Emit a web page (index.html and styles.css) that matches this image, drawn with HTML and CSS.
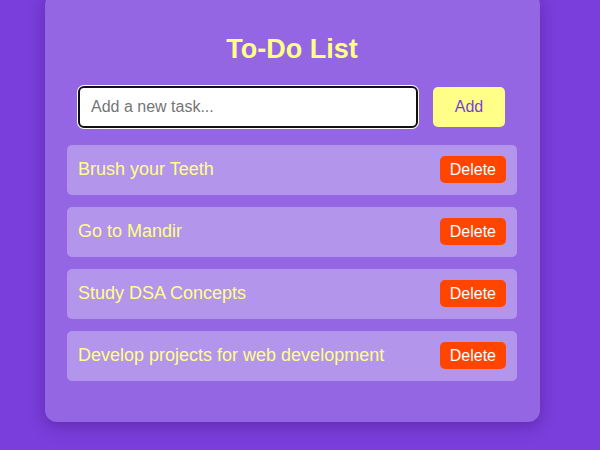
FILE: index.html
```html
<!DOCTYPE html>
<html>
<head>
<meta charset="utf-8">
<link rel="stylesheet" href="styles.css">
</head>
<body>
<div class="container">
  <h1 class="title">To-Do List</h1>
  <div class="input-row">
    <input class="task-input" type="text" placeholder="Add a new task...">
    <button class="add-btn">Add</button>
  </div>
  <ul class="list">
    <li class="item"><span class="item-text">Brush your Teeth</span><button class="del-btn">Delete</button></li>
    <li class="item"><span class="item-text">Go to Mandir</span><button class="del-btn">Delete</button></li>
    <li class="item"><span class="item-text">Study DSA Concepts</span><button class="del-btn">Delete</button></li>
    <li class="item"><span class="item-text">Develop projects for web development</span><button class="del-btn">Delete</button></li>
  </ul>
</div>
</body>
</html>
```

FILE: styles.css
```css
html, body {
  margin: 0;
  padding: 0;
  height: 100%;
  overflow: hidden;
}
body {
  background: #7a3edc;
  font-family: "Liberation Sans", Arial, sans-serif;
}
.container {
  box-sizing: border-box;
  width: 495px;
  margin: -7px 0 0 45px;
  padding: 30px 23px 41px 22px;
  background: #9466e3;
  border-radius: 12px;
  box-shadow: 0 4px 16px rgba(40, 10, 90, 0.35);
}
.title {
  margin: 10px 0 21px;
  text-align: center;
  color: #ffff88;
  font-size: 27px;
  font-weight: bold;
  line-height: 32px;
}
.input-row {
  display: flex;
  justify-content: flex-start;
  align-items: center;
  gap: 15px;
  padding-left: 11px;
  margin-bottom: 17px;
}
.task-input {
  box-sizing: border-box;
  width: 340px;
  height: 42px;
  padding: 0 11px;
  border: 2px solid #111;
  border-radius: 6px;
  box-shadow: 0 0 0 1px #ffffff;
  background: #fff;
  font-family: "Liberation Sans", Arial, sans-serif;
  font-size: 16px;
  color: #333;
  outline: none;
}
.task-input::placeholder {
  color: #757575;
}
.add-btn {
  box-sizing: border-box;
  width: 72px;
  height: 40px;
  border: none;
  border-radius: 5px;
  background: #ffff88;
  color: #7a3edc;
  font-family: "Liberation Sans", Arial, sans-serif;
  font-size: 16px;
  cursor: pointer;
}
.list {
  list-style: none;
  margin: 0;
  padding: 0;
  display: flex;
  flex-direction: column;
  gap: 12px;
}
.item {
  box-sizing: border-box;
  height: 50px;
  display: flex;
  align-items: center;
  justify-content: space-between;
  padding: 0 11px 2px 11px;
  background: #b495ec;
  border-radius: 5px;
}
.item-text {
  color: #ffff88;
  font-size: 18px;
}
.del-btn {
  box-sizing: border-box;
  height: 27px;
  padding: 0 10px;
  border: none;
  border-radius: 5px;
  background: #ff4500;
  color: #fff;
  font-family: "Liberation Sans", Arial, sans-serif;
  font-size: 16px;
  line-height: 27px;
}
```
